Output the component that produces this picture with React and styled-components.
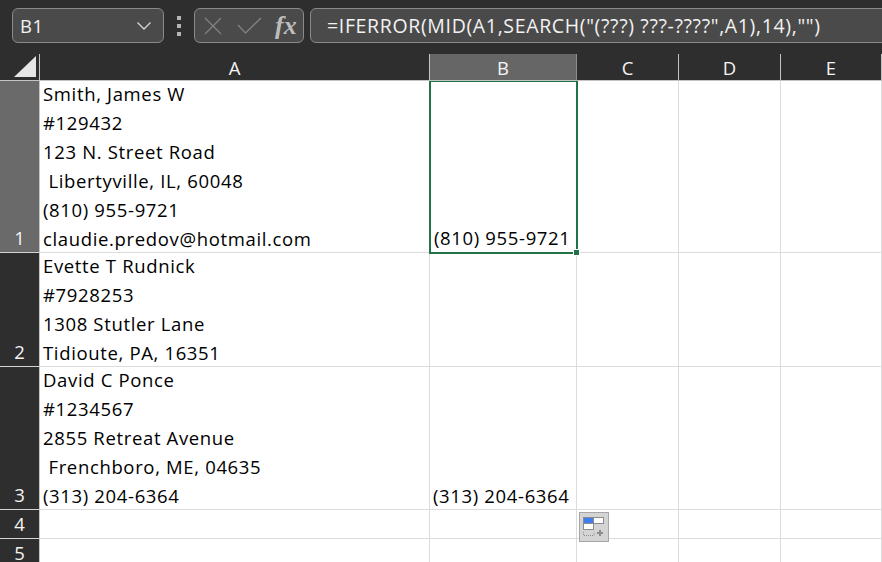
import React from "react";
import styled, { createGlobalStyle } from "styled-components";

const GlobalStyle = createGlobalStyle`
  html, body {
    margin: 0;
    padding: 0;
    width: 882px;
    height: 562px;
    overflow: hidden;
    background: #fff;
    font-family: "Open Sans", "Noto Sans", sans-serif;
  }
`;

const columns = ["A", "B", "C", "D", "E"];

const rows = [
  {
    label: "1",
    selected: true,
    a: [
      "Smith, James W",
      "#129432",
      "123 N. Street Road",
      " Libertyville, IL, 60048",
      "(810) 955-9721",
      "claudie.predov@hotmail.com",
    ],
    b: "(810) 955-9721",
  },
  {
    label: "2",
    a: ["Evette T Rudnick", "#7928253", "1308 Stutler Lane", "Tidioute, PA, 16351"],
  },
  {
    label: "3",
    a: [
      "David C Ponce",
      "#1234567",
      "2855 Retreat Avenue",
      " Frenchboro, ME, 04635",
      "(313) 204-6364",
    ],
    b: "(313) 204-6364",
  },
  { label: "4", a: [] },
  { label: "5", a: [] },
];

export default function App() {
  return (
    <Page>
      <GlobalStyle />
      <Toolbar>
        <NameBox>
          <span>B1</span>
          <svg width="16" height="10" viewBox="0 0 16 10">
            <path d="M1.5 1.5 L8 8 L14.5 1.5" fill="none" stroke="#d4d4d4" strokeWidth="1.3" />
          </svg>
        </NameBox>
        <Grip>
          <i />
          <i />
          <i />
        </Grip>
        <FormulaButtons>
          <svg width="18" height="18" viewBox="0 0 18 18">
            <path d="M1 1 L17 17 M17 1 L1 17" stroke="#808080" strokeWidth="1.4" fill="none" />
          </svg>
          <svg width="25" height="17" viewBox="0 0 25 17">
            <path d="M1 8 L8.5 16 L24 1" stroke="#808080" strokeWidth="1.4" fill="none" />
          </svg>
          <FxLabel>fx</FxLabel>
        </FormulaButtons>
        <FormulaBar>=IFERROR(MID(A1,SEARCH("(???) ???-????",A1),14),"")</FormulaBar>
      </Toolbar>

      <Sheet>
        <Corner>
          <svg width="22" height="21" viewBox="0 0 22 21">
            <path d="M0 21 L22 21 L22 0 Z" fill="#e6e6e6" />
          </svg>
        </Corner>
        {columns.map((col) => (
          <ColumnHeader key={col} $selected={col === "B"}>
            {col}
          </ColumnHeader>
        ))}

        {rows.map((row) => (
          <React.Fragment key={row.label}>
            <RowHeader $selected={row.selected}>{row.label}</RowHeader>
            <Cell>
              {row.a.map((line) => (
                <Line key={line}>{line}</Line>
              ))}
            </Cell>
            <Cell $active={row.selected}>
              {row.b && <Line>{row.b}</Line>}
              {row.selected && <FillHandle />}
            </Cell>
            <Cell />
            <Cell />
            <Cell />
          </React.Fragment>
        ))}
      </Sheet>

      <PasteOptions>
        <svg width="24" height="24" viewBox="0 0 24 24">
          <rect x="3.5" y="4.5" width="10" height="6" fill="#3f7df0" stroke="#8c8c8c" />
          <rect x="13.5" y="4.5" width="10" height="6" fill="#fff" stroke="#8c8c8c" />
          <rect x="3.5" y="10.5" width="10" height="6" fill="#fff" stroke="#8c8c8c" />
          <path d="M3.5 19 V22.5 H14 V19" fill="none" stroke="#8c8c8c" strokeDasharray="1 1" />
          <path d="M17 20 H23 M20 17 V23" stroke="#8c8c8c" strokeWidth="2" fill="none" />
        </svg>
      </PasteOptions>
    </Page>
  );
}

const Page = styled.div`
  position: relative;
  width: 882px;
  height: 562px;
  overflow: hidden;
  background: #fff;
`;

const Toolbar = styled.div`
  display: flex;
  align-items: center;
  height: 54px;
  box-sizing: border-box;
  padding: 0 0 3px 12px;
  background: #2e2e2e;
  color: #f2f2f2;
`;

const NameBox = styled.div`
  display: flex;
  align-items: center;
  justify-content: space-between;
  box-sizing: border-box;
  width: 152px;
  height: 35px;
  padding: 0 11px 0 7px;
  background: #4a4a4a;
  border: 1px solid #8a8a8a;
  border-radius: 6px;
  font-size: 18.5px;
  letter-spacing: 0.6px;
`;

const Grip = styled.div`
  display: flex;
  flex-direction: column;
  gap: 4px;
  margin: 0 13px 0 13px;

  i {
    display: block;
    width: 4px;
    height: 4px;
    background: #b5b5b5;
  }
`;

const FormulaButtons = styled.div`
  display: flex;
  align-items: center;
  box-sizing: border-box;
  width: 110px;
  height: 35px;
  padding: 0 0 0 9px;
  gap: 15px;
  background: #4a4a4a;
  border: 1px solid #8a8a8a;
  border-radius: 6px;
`;

const FxLabel = styled.span`
  margin-left: -2px;
  font-family: "Liberation Serif", serif;
  font-style: italic;
  font-weight: 700;
  font-size: 26px;
  line-height: 1;
  color: #bdbdbd;
`;

const FormulaBar = styled.div`
  display: flex;
  align-items: center;
  box-sizing: border-box;
  flex: 1;
  height: 35px;
  margin: 0 -12px 0 6px;
  padding-left: 16px;
  background: #4a4a4a;
  border: 1px solid #8a8a8a;
  border-radius: 6px;
  font-size: 19.5px;
  letter-spacing: 0.65px;
  white-space: pre;
`;

const Sheet = styled.div`
  display: grid;
  grid-template-columns: 40px 390px 147px 102px 102px 101px;
  grid-template-rows: 27px 172px 114px 143px 29px 29px;
`;

const Corner = styled.div`
  display: flex;
  align-items: flex-end;
  justify-content: flex-end;
  box-sizing: border-box;
  padding: 0 3px 3px 0;
  background: #2e2e2e;
  border-right: 1px solid #c4c4c4;
  border-bottom: 1px solid #c4c4c4;
  position: relative;
  z-index: 2;
`;

const ColumnHeader = styled.div`
  display: flex;
  align-items: center;
  justify-content: center;
  box-sizing: border-box;
  background: ${(p) => (p.$selected ? "#666666" : "#2e2e2e")};
  border-right: 1px solid ${(p) => (p.$selected ? "#8c8c8c" : "#c4c4c4")};
  border-bottom: 1px solid #c4c4c4;
  color: #f4f4f4;
  font-size: 18.5px;
  position: relative;
  z-index: 2;
`;

const RowHeader = styled.div`
  display: flex;
  align-items: flex-end;
  justify-content: center;
  box-sizing: border-box;
  padding-bottom: 5px;
  background: ${(p) => (p.$selected ? "#6a6a6a" : "#2e2e2e")};
  border-right: 1px solid #c4c4c4;
  border-bottom: 1px solid #d4d4d4;
  color: #f4f4f4;
  font-size: 18.5px;
  line-height: 18px;
`;

const Cell = styled.div`
  display: flex;
  flex-direction: column;
  justify-content: flex-end;
  position: relative;
  box-sizing: border-box;
  min-width: 0;
  padding: 0 0 0 3px;
  border-right: 1px solid #dcdcdc;
  border-bottom: 1px solid #dcdcdc;
  color: #000;
  font-size: 18.5px;
  letter-spacing: 0.65px;

  ${(p) =>
    p.$active &&
    `
    margin: -1px -1px -1px -1px;
    padding: 0 0 1px 3px;
    border: 2px solid #217346;
    z-index: 1;
  `}
`;

const Line = styled.div`
  height: 29px;
  line-height: 32px;
  white-space: pre;
  flex-shrink: 0;
`;

const FillHandle = styled.span`
  position: absolute;
  right: -4px;
  bottom: -4px;
  width: 5px;
  height: 5px;
  background: #217346;
  border: 1px solid #fff;
`;

const PasteOptions = styled.div`
  position: absolute;
  left: 579px;
  top: 512px;
  display: flex;
  box-sizing: border-box;
  width: 30px;
  height: 30px;
  background: #d4d4d4;
  border: 1px solid #a6a6a6;
`;
